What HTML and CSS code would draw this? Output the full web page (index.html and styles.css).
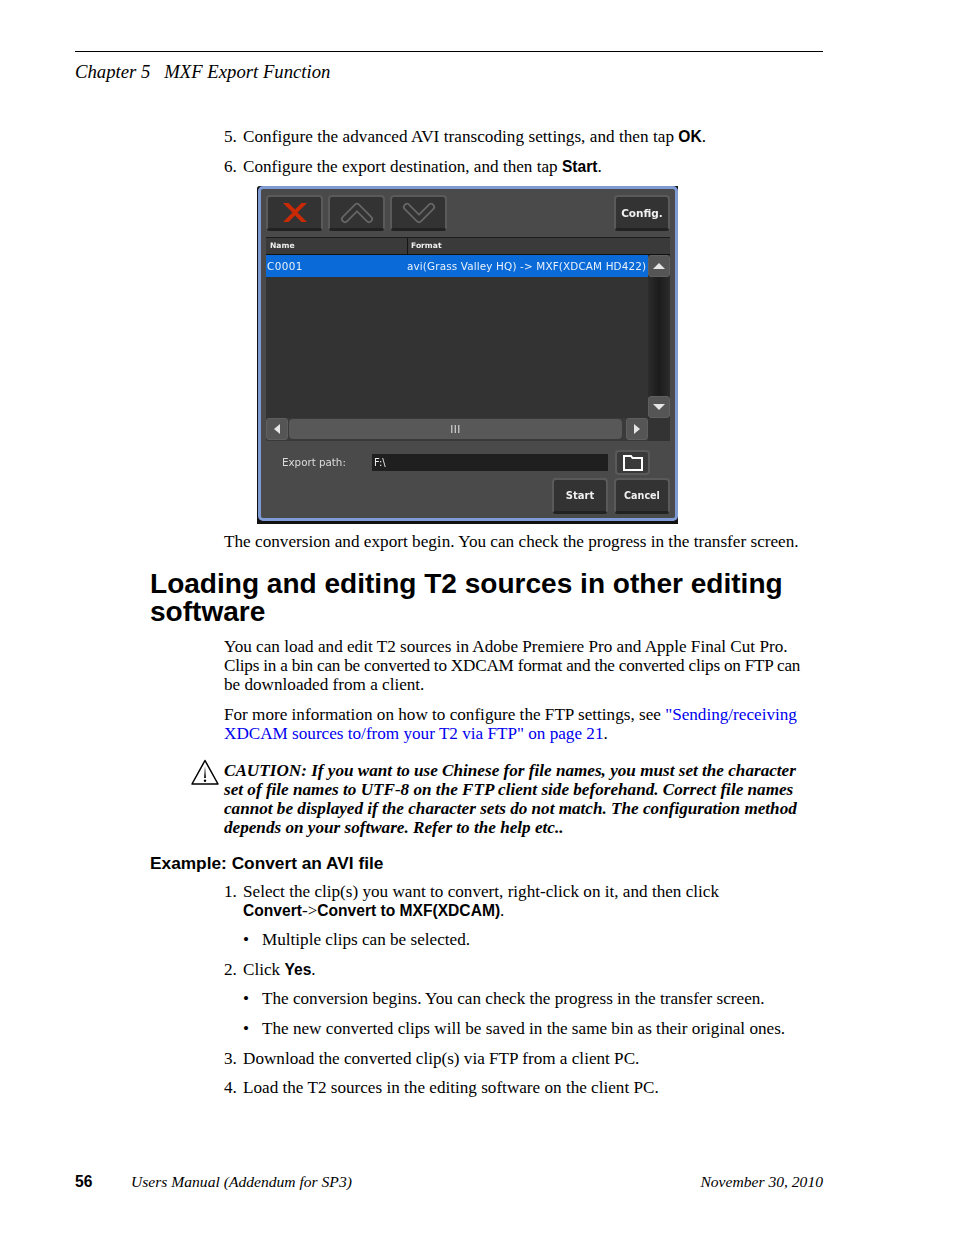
FILE: index.html
```html
<!DOCTYPE html>
<html lang="en">

<head>
    <meta charset="UTF-8">
    <title>Chapter 5 MXF Export Function</title>
    <link rel="stylesheet" href="styles.css">
</head>

<body>
    <div class="page">
        <header class="running-head">Chapter 5&nbsp;&nbsp; MXF Export Function</header>

        <div class="body-text steps-top">
            <ol class="steps" start="5">
                <li><span class="wide">Configure the advanced AVI transcoding settings, and then tap</span> <b class="ui">OK</b>.</li>
                <li>Configure the export destination, and then tap <b class="ui">Start</b>.</li>
            </ol>
        </div>

        <!-- screenshot of the export dialog -->
        <div class="dialog-wrap">
            <div class="dialog">
                <div class="toolbar">
                    <button class="btn btn-icon">
                        <svg width="24" height="19" viewBox="0 0 24 19">
                            <path d="M0 0h5.5L12 6.5 18.5 0H24l-9.5 9.500L24 19h-5.500L12 12.500 5.500 19H0l9.500-9.500z" fill="#c92a05" />
                        </svg>
                    </button>
                    <button class="btn btn-icon">
                        <svg width="36" height="22" viewBox="0 0 36 22">
                            <polyline points="6,17 18,5 30,17" fill="none" stroke="#666" stroke-width="8" stroke-linecap="round" stroke-linejoin="round" />
                            <polyline points="6,17 18,5 30,17" fill="none" stroke="#333" stroke-width="4.500" stroke-linecap="round" stroke-linejoin="round" />
                        </svg>
                    </button>
                    <button class="btn btn-icon">
                        <svg width="36" height="22" viewBox="0 0 36 22">
                            <polyline points="6,5 18,17 30,5" fill="none" stroke="#666" stroke-width="8" stroke-linecap="round" stroke-linejoin="round" />
                            <polyline points="6,5 18,17 30,5" fill="none" stroke="#333" stroke-width="4.500" stroke-linecap="round" stroke-linejoin="round" />
                        </svg>
                    </button>
                    <button class="btn btn-text btn-config">Config.</button>
                </div>

                <div class="table">
                    <div class="table-head">
                        <div class="col-name">Name</div>
                        <div class="col-format">Format</div>
                    </div>
                    <div class="table-main">
                        <div class="table-rows">
                            <div class="row-selected">
                                <div class="col-name">C0001</div>
                                <div class="col-format">avi(Grass Valley HQ) -&gt; MXF(XDCAM HD422)</div>
                            </div>
                        </div>
                        <div class="vscroll">
                            <div class="scroll-btn"><span class="tri tri-up"></span></div>
                            <div class="scroll-btn"><span class="tri tri-down"></span></div>
                        </div>
                    </div>
                    <div class="hscroll">
                        <div class="scroll-btn"><span class="tri tri-left"></span></div>
                        <div class="hscroll-thumb">III</div>
                        <div class="scroll-btn"><span class="tri tri-right"></span></div>
                    </div>
                </div>

                <div class="export-row">
                    <span class="export-label">Export path:</span>
                    <div class="export-input">F:\</div>
                    <button class="btn btn-folder">
                        <svg width="20" height="17" viewBox="0 0 20 17">
                            <path d="M1 16V2h7l1.500 2H19v12z" fill="none" stroke="#fff" stroke-width="2" />
                        </svg>
                    </button>
                </div>

                <div class="actions">
                    <button class="btn btn-text btn-start">Start</button>
                    <button class="btn btn-text btn-cancel">Cancel</button>
                </div>
            </div>
        </div>

        <div class="body-text">
            <p class="after-dialog">The conversion and export begin. You can check the progress in the transfer screen.</p>
        </div>

        <h1>Loading and editing T2 sources in other editing software</h1>

        <div class="body-text">
            <p class="para">You can load and edit T2 sources in Adobe Premiere Pro and Apple Final Cut Pro.<br>
                <span class="tight">Clips in a bin can be converted to XDCAM format and the converted clips on FTP can</span><br>
                be downloaded from a client.</p>
            <p class="para">For more information on how to configure the FTP settings, see <a href="#">"Sending/receiving</a><br>
                <a href="#">XDCAM sources to/from your T2 via FTP" on page 21</a>.</p>
        </div>

        <div class="caution">
            <svg class="caution-icon" width="30" height="27" viewBox="0 0 30 27">
                <path d="M15 1.500 2 25h26z" fill="#fff" stroke="#000" stroke-width="1.500" stroke-linejoin="round" />
                <path d="M15 7 14.100 19h1.800z" fill="#000" />
                <circle cx="15" cy="21.700" r="1.200" fill="#000" />
            </svg>
            <p>CAUTION: If you want to use Chinese for file names, you must set the character<br>
                set of file names to UTF-8 on the FTP client side beforehand. Correct file names<br>
                cannot be displayed if the character sets do not match. The configuration method<br>
                depends on your software. Refer to the help etc..</p>
        </div>

        <h2>Example: Convert an AVI file</h2>

        <div class="body-text">
            <ol class="steps steps-list">
                <li>Select the clip(s) you want to convert, right-click on it, and then click<br>
                    <b class="ui">Convert</b>-&gt;<b class="ui">Convert to MXF(XDCAM)</b>.
                    <ul>
                        <li>Multiple clips can be selected.</li>
                    </ul>
                </li>
                <li>Click <b class="ui">Yes</b>.
                    <ul>
                        <li>The conversion begins. You can check the progress in the transfer screen.</li>
                        <li>The new converted clips will be saved in the same bin as their original ones.</li>
                    </ul>
                </li>
                <li>Download the converted clip(s) via FTP from a client PC.</li>
                <li>Load the T2 sources in the editing software on the client PC.</li>
            </ol>
        </div>

        <footer class="running-foot">
            <b class="page-no">56</b>
            <span class="foot-title">Users Manual (Addendum for SP3)</span>
            <span class="foot-date">November 30, 2010</span>
        </footer>
    </div>
</body>

</html>
```

FILE: styles.css
```css
* {
    padding: 0;
    margin: 0;
    box-sizing: border-box;
}

html,
body {
    background-color: #fff;
}

body {
    font-family: "Liberation Serif", "Times New Roman", serif;
    font-size: 17.15px;
    line-height: 19px;
    color: #000;
}

.page {
    width: 954px;
    height: 1235px;
    padding: 51px 131px 0 75px;
    position: relative;
}

.running-head {
    border-top: 1px solid #000;
    padding-top: 9px;
    font-style: italic;
    font-size: 18.7px;
    line-height: 21px;
}

.body-text {
    margin-left: 149px;
}

.steps-top {
    margin-top: 45px;
}

.wide {
    letter-spacing: 0.04px;
}

.tight {
    letter-spacing: -0.21px;
}

.steps {
    list-style: none;
    counter-reset: step 4;
}

.steps > li {
    counter-increment: step;
    padding-left: 19px;
    position: relative;
    margin-bottom: 10.6px;
}

.steps > li::before {
    content: counter(step) ".";
    position: absolute;
    left: 0;
}

.steps-list {
    counter-reset: step 0;
}

.ui {
    font-family: "Liberation Sans", Arial, sans-serif;
    font-size: 15.6px;
    font-weight: bold;
}

.steps ul {
    list-style: none;
    margin-top: 10.6px;
}

.steps ul li {
    padding-left: 19px;
    margin-bottom: 10.6px;
    position: relative;
}

.steps ul li:last-child {
    margin-bottom: 0;
}

.steps ul li::before {
    content: "\2022";
    position: absolute;
    left: 0;
}

/* dialog */
.dialog-wrap {
    margin-left: 182px;
    width: 421px;
    height: 338px;
    background-color: #111;
    border-top-left-radius: 3px;
    border-left: 1px solid #111;
    border-bottom: 3px solid #111;
}

.dialog {
    height: 335px;
    width: 420px;
    background-color: #4a4a4a;
    border: 3px solid #7e9bd6;
    border-radius: 5px;
    padding: 6px 5px 0 5px;
    font-family: "DejaVu Sans", sans-serif;
    color: #eee;
    filter: blur(0.3px);
}

.toolbar {
    display: flex;
    gap: 5px;
    height: 36px;
}

.btn {
    background-color: #333;
    border: 2px solid #5a5a5a;
    border-bottom: 3px solid #222;
    border-radius: 4px;
    color: #f0f0f0;
    font-family: "DejaVu Sans", sans-serif;
    font-weight: bold;
    font-size: 10.5px;
    display: flex;
    align-items: center;
    justify-content: center;
}

.btn-icon {
    width: 57px;
}

.btn-text {
    width: 56px;
    height: 36px;
}

.btn-config {
    margin-left: auto;
}

.btn-start {
    font-size: 10px;
}

.btn-cancel {
    font-size: 9.6px;
}

.table {
    margin-top: 6px;
    background-color: #333;
    border-top: 1px solid #1c1c1c;
    height: 204px;
    width: 404px;
}

.table-head {
    display: flex;
    height: 17px;
    background-color: #3a3a3a;
    border-bottom: 1px solid #111;
    font-size: 7.6px;
    font-weight: bold;
    line-height: 15px;
}

.table-head .col-name {
    width: 142px;
    padding-left: 4px;
    border-right: 1px solid #151515;
}

.table-head .col-format {
    padding-left: 3px;
}

.table-main {
    display: flex;
    height: 163px;
}

.table-rows {
    width: 382px;
}

.row-selected {
    display: flex;
    height: 22px;
    background-color: #0a6bd8;
    font-size: 10.4px;
    line-height: 22px;
    color: #e8f0fa;
}

.row-selected .col-name {
    width: 141px;
    padding-left: 1px;
    letter-spacing: 0.4px;
}

.row-selected .col-format {
    white-space: nowrap;
    letter-spacing: 0.15px;
}

.vscroll {
    width: 22px;
    background: linear-gradient(to right, #2c2c2c, #1c1c1c 50%, #2c2c2c);
    display: flex;
    flex-direction: column;
    justify-content: space-between;
}

.scroll-btn {
    width: 22px;
    height: 22px;
    background-color: #555;
    border: 1px solid #5f5f5f;
    border-radius: 3px;
    display: flex;
    align-items: center;
    justify-content: center;
}

.tri {
    width: 0;
    height: 0;
    border-style: solid;
    border-color: transparent;
}

.tri-up {
    border-width: 0 6px 6px 6px;
    border-bottom-color: #e6e6e6;
}

.tri-down {
    border-width: 6px 6px 0 6px;
    border-top-color: #e6e6e6;
}

.tri-left {
    border-width: 5px 6px 5px 0;
    border-right-color: #e6e6e6;
}

.tri-right {
    border-width: 5px 0 5px 6px;
    border-left-color: #e6e6e6;
}

.hscroll {
    display: flex;
    gap: 1px;
    height: 23px;
    width: 382px;
    background-color: #3a3a3a;
}

.hscroll-thumb {
    flex: 1;
    background-color: #585858;
    border-radius: 4px;
    margin: 1px 3px 2px 0;
    text-align: center;
    font-family: "Liberation Sans", sans-serif;
    font-size: 11px;
    letter-spacing: 0.5px;
    line-height: 20px;
    color: #ddd;
}

.export-row {
    display: flex;
    align-items: center;
    height: 25px;
    margin-top: 9px;
}

.export-label {
    width: 106px;
    padding-left: 16px;
    font-size: 10.3px;
    color: #ddd;
    white-space: nowrap;
}

.export-input {
    width: 236px;
    height: 17px;
    background-color: #1f1f1f;
    font-size: 10px;
    line-height: 17px;
    padding-left: 2px;
    color: #eee;
}

.btn-folder {
    width: 35px;
    height: 25px;
    margin-left: 7px;
    background-color: #3a3a3a;
    border-bottom: 2px solid #5a5a5a;
}

.actions {
    display: flex;
    justify-content: flex-end;
    gap: 6px;
    margin-top: 3px;
}

/* text below the dialog */
.after-dialog {
    margin-top: 8px;
    font-size: 17.2px;
}

h1 {
    font-family: "Liberation Sans", Arial, sans-serif;
    font-size: 28.05px;
    line-height: 28px;
    font-weight: bold;
    margin: 19px 0 0 75px;
    width: 680px;
}

.para {
    margin-bottom: 10.5px;
}

h1 + .body-text {
    margin-top: 11px;
}

a {
    color: #0000ee;
    text-decoration: none;
}

.caution {
    margin: 18px 0 0 115px;
    display: flex;
    align-items: flex-start;
    gap: 4px;
    font-weight: bold;
    font-style: italic;
    white-space: nowrap;
}

.caution-icon {
    flex: none;
    margin-top: -2px;
}

h2 {
    font-family: "Liberation Sans", Arial, sans-serif;
    font-size: 17.3px;
    line-height: 19px;
    font-weight: bold;
    margin: 17px 0 0 75px;
}

h2 + .body-text {
    margin-top: 9px;
}

.running-foot {
    position: absolute;
    left: 75px;
    right: 131px;
    top: 1172px;
    display: flex;
    font-style: italic;
    font-size: 15.6px;
    line-height: 19px;
}

.page-no {
    font-family: "Liberation Sans", Arial, sans-serif;
    font-style: normal;
    width: 56px;
}

.foot-date {
    margin-left: auto;
}
```
